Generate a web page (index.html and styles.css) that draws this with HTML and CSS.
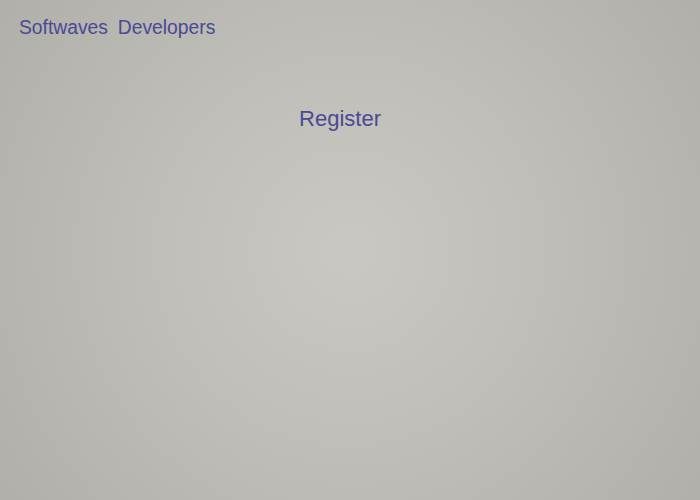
FILE: index.html
```html
<!DOCTYPE html>
<html>
<head>
<meta charset="utf-8">
<link rel="stylesheet" href="styles.css">
</head>
<body>
<header class="brand">Softwaves Developers</header>
<main class="content">
  <h1 class="title">Register</h1>
</main>
</body>
</html>
```
FILE: styles.css
```css
html, body {
  margin: 0;
  height: 100%;
}
body {
  background: radial-gradient(circle at 50% 50%, #c9c8c3 0%, #bfbeb9 45%, #b0afaa 100%);
  font-family: "Liberation Sans", Arial, sans-serif;
  color: #4a4a94;
}
.brand {
  padding: 16px 0 0 19px;
  font-size: 19.3px;
  line-height: 24px;
  word-spacing: 4.5px;
}
.content {
  display: flex;
  flex-direction: column;
  align-items: center;
  padding-top: 65px;
}
.title {
  margin: 0;
  font-weight: normal;
  font-size: 22px;
  line-height: 28px;
  padding-right: 20px;
}
```
